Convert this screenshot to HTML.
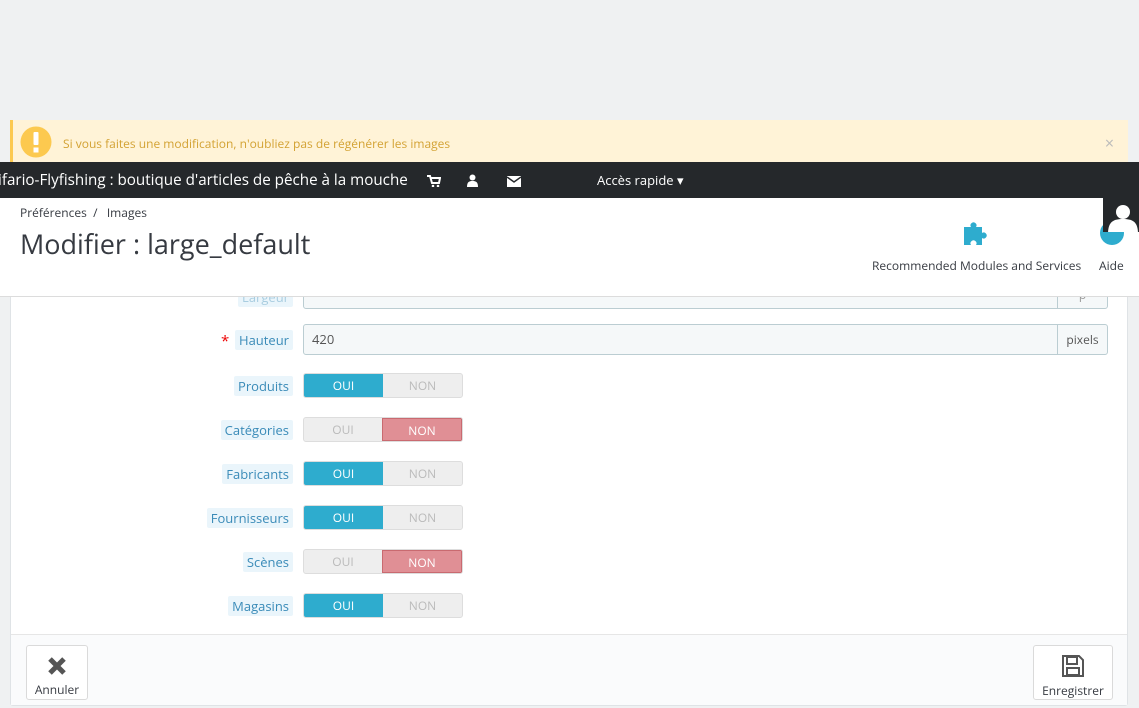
<!DOCTYPE html>
<html><head><meta charset="utf-8"><style>
*{box-sizing:border-box;margin:0;padding:0}
body{width:1139px;height:708px;background:#eff1f2;font-family:"Open Sans","Liberation Sans",sans-serif;position:relative;overflow:hidden;font-size:13px}
.abs{position:absolute}
.alert{left:10px;top:120px;width:1118px;height:42px;background:#fff3d7;border-left:3px solid #fcc94f;color:#d3a233;font-size:12px}
.panel{left:10px;top:250px;width:1118px;height:456px;background:#fff;border:1px solid #dfe3e6;border-radius:3px}
.lbl{position:absolute;right:846px;height:20px;line-height:20px;padding:0 4px;background:#eaf5fb;color:#3a8bb8;font-size:13px;border-radius:2px}
.inp{position:absolute;left:303px;width:805px;height:31px;background:#f5f8f9;border:1px solid #bbcdd2;border-radius:3px;color:#555;font-size:13px;line-height:29px;padding-left:8px}
.inp span{position:absolute;right:0;top:0;height:29px;width:50px;border-left:1px solid #bbcdd2;text-align:center;font-size:12px}
.tg{position:absolute;left:303px;width:160px;height:25px;display:flex;border-radius:3px;overflow:hidden;background:#eee;border:1px solid #ddd;font-size:12px}
.tg div{flex:1;text-align:center;line-height:23px;color:#bbb}
.tg .on{background:#2eacce;color:#fff}
.tg .no{background:#e08f95;color:#fff;border:1px solid #c96a70}
.btn{position:absolute;top:645px;height:55px;background:#fff;border:1px solid #dadada;border-radius:3px;font-size:12px;color:#363a41;text-align:center}
</style></head><body>
<div class="abs alert">
<svg class="abs" style="left:7px;top:6px" width="32" height="32"><circle cx="16" cy="16" r="15.5" fill="#fcc94f"/><rect x="13.5" y="6" width="5" height="13" rx="1" fill="#fff"/><rect x="13.5" y="21.5" width="5" height="5" fill="#fff"/></svg>
<div class="abs" style="left:50px;top:15px">Si vous faites une modification, n'oubliez pas de régénérer les images</div>
<div class="abs" style="right:14px;top:12px;color:#bbb;font-size:16px">×</div>
</div>
<div class="abs" style="left:0;top:162px;width:1139px;height:36px;background:#25282b;color:#fff">
<div class="abs" style="left:-2px;top:8px;font-size:15.2px;white-space:nowrap">ifario-Flyfishing : boutique d'articles de pêche à la mouche</div>
<svg class="abs" style="left:427px;top:13px" width="14" height="12"><path d="M0 1h3l2 7h7l1-5H4" stroke="#fff" stroke-width="2" fill="none"/><circle cx="6" cy="11" r="1.3" fill="#fff"/><circle cx="11" cy="11" r="1.3" fill="#fff"/></svg>
<svg class="abs" style="left:467px;top:12px" width="11" height="13"><circle cx="5.5" cy="3.5" r="3" fill="#fff"/><path d="M0 13c0-5 2-6 5.5-6s5.5 1 5.5 6z" fill="#fff"/></svg>
<svg class="abs" style="left:507px;top:14px" width="14" height="11"><rect width="14" height="11" fill="#fff"/><path d="M0 1l7 5 7-5" stroke="#25282b" stroke-width="1.5" fill="none"/></svg>
<div class="abs" style="left:597px;top:9px;font-size:13px">Accès rapide ▾</div>
</div>
<div class="abs panel">
<div class="lbl" style="top:36px;right:834px;color:#a9cde0">Largeur</div>
<div class="inp" style="top:28px;left:292px;width:805px;height:30px"><span style="color:#999">p</span></div>
</div>
<div class="abs" style="left:0;top:198px;width:1139px;height:99px;background:#fff;border-bottom:1px solid #dcdcdc">
<div class="abs" style="left:20px;top:6px;font-size:12px;color:#363a41">Préférences &nbsp;/ &nbsp; Images</div>
<div class="abs" style="left:20px;top:27px;font-size:27px;color:#363a41">Modifier : large_default</div>
<svg class="abs" style="left:962px;top:22px" width="28" height="26"><path d="M2 7h7a3 3 0 1 1 5 0h6v6a3 3 0 1 1 0 5v7h-6a3 3 0 1 0-5 0H2z" fill="#2eacce"/></svg>
<div class="abs" style="left:872px;top:59px;font-size:12px;color:#363a41">Recommended Modules and Services</div>
<svg class="abs" style="left:1099px;top:22px" width="26" height="26"><circle cx="13" cy="13" r="12" fill="#2eacce"/></svg>
<div class="abs" style="left:1099px;top:59px;font-size:12px;color:#363a41">Aide</div>
<div class="abs" style="left:1103px;top:0;width:36px;height:34px;background:#25282b"><svg width="36" height="34"><circle cx="20" cy="14" r="7" fill="#fff"/><path d="M5 36c0-12 5-15 15-15s15 3 15 15z" fill="#fff"/></svg></div>
</div>
<span class="abs" style="left:221px;top:331px;color:#e00;font-size:15px">*</span>
<div class="lbl" style="top:330px">Hauteur</div>
<div class="inp" style="top:324px">420<span>pixels</span></div>
<div class="lbl" style="top:376px">Produits</div><div class="tg" style="top:373px"><div class="on">OUI</div><div>NON</div></div>
<div class="lbl" style="top:420px">Catégories</div><div class="tg" style="top:417px"><div>OUI</div><div class="no">NON</div></div>
<div class="lbl" style="top:464px">Fabricants</div><div class="tg" style="top:461px"><div class="on">OUI</div><div>NON</div></div>
<div class="lbl" style="top:508px">Fournisseurs</div><div class="tg" style="top:505px"><div class="on">OUI</div><div>NON</div></div>
<div class="lbl" style="top:552px">Scènes</div><div class="tg" style="top:549px"><div>OUI</div><div class="no">NON</div></div>
<div class="lbl" style="top:596px">Magasins</div><div class="tg" style="top:593px"><div class="on">OUI</div><div>NON</div></div>
<div class="abs" style="left:11px;top:634px;width:1116px;height:71px;background:#fafbfc;border-top:1px solid #e6e6e6"></div>
<div class="btn" style="left:26px;width:62px"><svg style="margin-top:10px" width="20" height="20"><path d="M3 3l14 14M17 3L3 17" stroke="#555" stroke-width="5"/></svg><div style="margin-top:1px">Annuler</div></div>
<div class="btn" style="left:1033px;width:80px"><svg style="margin-top:8px" width="24" height="24"><path d="M2 2h16l4 4v16H2z" fill="none" stroke="#555" stroke-width="2"/><rect x="6" y="3" width="10" height="7" fill="none" stroke="#555" stroke-width="2"/><rect x="6" y="14" width="12" height="7" fill="none" stroke="#555" stroke-width="2"/></svg><div style="margin-top:0">Enregistrer</div></div>
</body></html>
